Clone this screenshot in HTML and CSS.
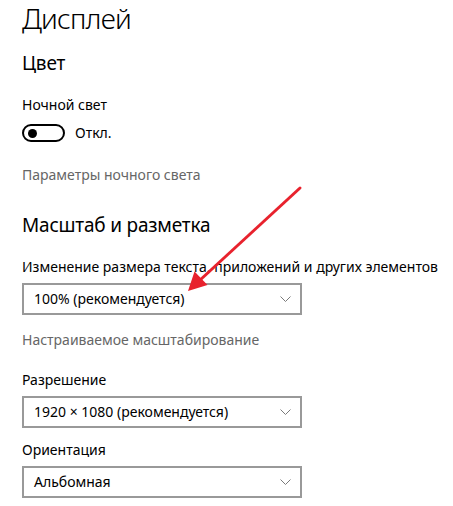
FILE: index.html
```html
<!DOCTYPE html>
<html lang="ru">
<head>
<meta charset="utf-8">
<link rel="stylesheet" href="styles.css">
</head>
<body>
<div class="page">
  <h1 class="title">Дисплей</h1>
  <h2 class="section section-color">Цвет</h2>
  <div class="label label-night">Ночной свет</div>
  <div class="toggle-row">
    <span class="toggle"><span class="knob"></span></span>
    <span class="toggle-text">Откл.</span>
  </div>
  <div class="link link-night">Параметры ночного света</div>

  <h2 class="section section-scale">Масштаб и разметка</h2>
  <div class="label label-size">Изменение размера текста, приложений и других элементов</div>
  <div class="select">
    <span class="select-text">100% (рекомендуется)</span>
    <svg class="chev" width="11" height="6" viewBox="0 0 11 6"><path d="M0.5 0.5 L5.5 5.5 L10.5 0.5" fill="none" stroke="#7a7a7a" stroke-width="1"/></svg>
  </div>
  <div class="link link-custom">Настраиваемое масштабирование</div>
  <div class="label label-res">Разрешение</div>
  <div class="select">
    <span class="select-text">1920 × 1080 (рекомендуется)</span>
    <svg class="chev" width="11" height="6" viewBox="0 0 11 6"><path d="M0.5 0.5 L5.5 5.5 L10.5 0.5" fill="none" stroke="#7a7a7a" stroke-width="1"/></svg>
  </div>
  <div class="label label-orient">Ориентация</div>
  <div class="select">
    <span class="select-text">Альбомная</span>
    <svg class="chev" width="11" height="6" viewBox="0 0 11 6"><path d="M0.5 0.5 L5.5 5.5 L10.5 0.5" fill="none" stroke="#7a7a7a" stroke-width="1"/></svg>
  </div>
</div>
<svg class="arrow" width="453" height="506" viewBox="0 0 453 506">
  <line x1="300" y1="188" x2="199" y2="281" stroke="#e8222d" stroke-width="3" stroke-linecap="round"/>
  <polygon points="188,291 194.5,271.5 207.5,285" fill="#e8222d"/>
</svg>
</body>
</html>
```
FILE: styles.css
```css
html, body {
  margin: 0;
  padding: 0;
  background: #ffffff;
}
body {
  font-family: "Noto Sans", "Open Sans", sans-serif;
  color: #000000;
  width: 453px;
  height: 506px;
  overflow: hidden;
  position: relative;
}
.page {
  display: flex;
  flex-direction: column;
  align-items: flex-start;
  padding-left: 22px;
}
.title {
  margin: 0;
  font-size: 28px;
  font-weight: 300;
  letter-spacing: -0.8px;
  line-height: 36px;
  height: 36px;
}
.section {
  margin: 0;
  font-size: 19px;
  font-weight: 400;
  letter-spacing: -0.2px;
  line-height: 28px;
  height: 28px;
}
.section-color { margin-top: 13px; }
.section-scale { margin-top: 26px; }
.label, .link {
  font-size: 14px;
  line-height: 20px;
  height: 20px;
  white-space: nowrap;
}
.link { color: #666666; }
.label-night { margin-top: 18px; }
.toggle-row {
  margin-top: 8px;
  display: flex;
  align-items: center;
  height: 20px;
}
.toggle {
  box-sizing: border-box;
  width: 43px;
  height: 18px;
  border: 2px solid #000;
  border-radius: 10px;
  display: flex;
  align-items: center;
  padding-left: 4px;
}
.knob {
  width: 9px;
  height: 9px;
  border-radius: 50%;
  background: #000;
}
.toggle-text {
  margin-left: 10px;
  font-size: 14px;
  line-height: 20px;
}
.link-night { margin-top: 22px; }
.label-size { margin-top: 18px; }
.select {
  box-sizing: border-box;
  margin-top: 6px;
  width: 280px;
  height: 32px;
  border: 2px solid #999999;
  display: flex;
  align-items: center;
  justify-content: space-between;
  padding: 0 9px 0 10px;
}
.select-text {
  font-size: 14px;
  line-height: 20px;
  white-space: nowrap;
}
.chev { display: block; }
.link-custom { margin-top: 15px; }
.label-res { margin-top: 20px; }
.label-orient { margin-top: 12px; }
.arrow {
  position: absolute;
  left: 0;
  top: 0;
  pointer-events: none;
}
```
